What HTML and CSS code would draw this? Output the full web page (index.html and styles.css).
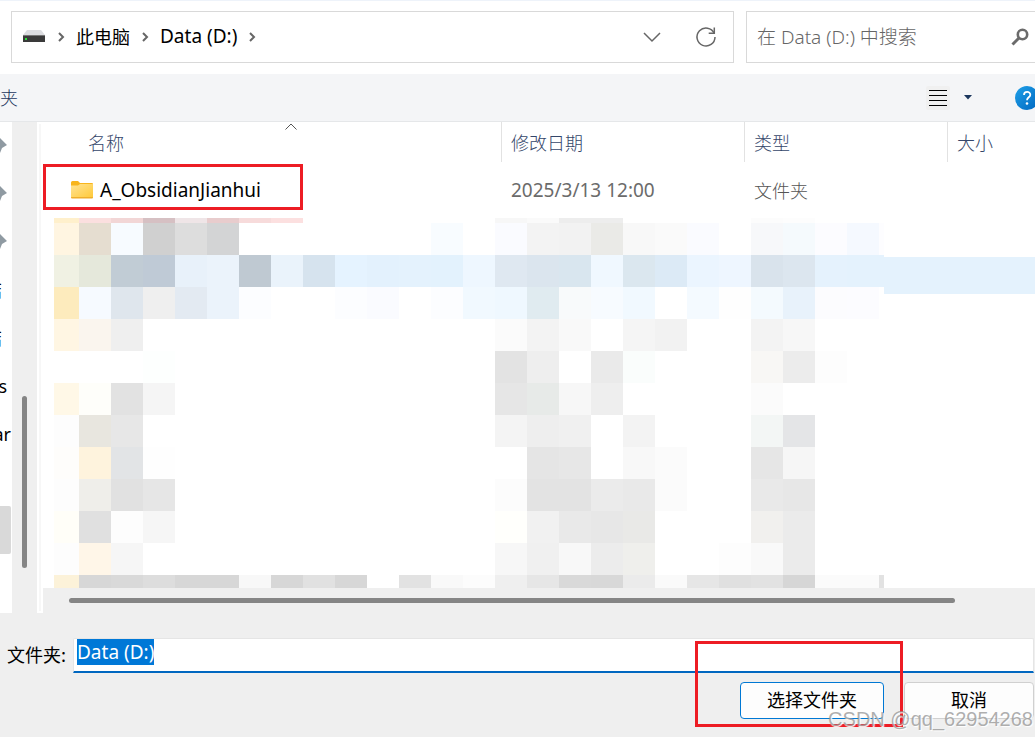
FILE: index.html
```
<!DOCTYPE html>
<html lang="zh-CN">
<head>
    <meta charset="UTF-8">
    <meta name="viewport" content="width=device-width, initial-scale=1.0">
    <title>选择文件夹</title>
    <link rel="stylesheet" href="styles.css">
</head>
<body>
    <header class="topbar">
        <nav class="address">
            <svg class="drive" width="24" height="16" viewBox="0 0 24 16">
                <path d="M5 1h14l4 5H1z" fill="#dcdde1"/>
                <rect x="1" y="6" width="22" height="7" fill="#3a3a3a"/>
                <rect x="1" y="6" width="22" height="1" fill="#777"/>
                <rect x="3" y="9" width="2" height="2" fill="#2be03a"/>
            </svg>
            <svg class="sep" width="8" height="12" viewBox="0 0 8 12"><path d="M2 2l4 4-4 4"/></svg>
            <a href="#" class="cjk">此电脑</a>
            <svg class="sep" width="8" height="12" viewBox="0 0 8 12"><path d="M2 2l4 4-4 4"/></svg>
            <a href="#">Data (D:)</a>
            <svg class="sep" width="8" height="12" viewBox="0 0 8 12"><path d="M2 2l4 4-4 4"/></svg>
            <button class="icon-btn push" aria-label="历史">
                <svg width="20" height="20" viewBox="0 0 20 20"><path d="M2 6l8 8 8-8" fill="none" stroke="#666" stroke-width="1.5"/></svg>
            </button>
            <button class="icon-btn" aria-label="刷新">
                <svg width="22" height="22" viewBox="0 0 22 22" fill="none" stroke="#666" stroke-width="1.5">
                    <path d="M19.2 7.3A9 9 0 1 0 20 11"/>
                    <path d="M19.3 1.5v5.8h-5.6"/>
                </svg>
            </button>
        </nav>
        <form class="search">
            <input type="text" placeholder="在 Data (D:) 中搜索" aria-label="搜索">
            <svg width="18" height="18" viewBox="0 0 18 18" fill="none" stroke="#6b6b6b">
                <circle cx="11.5" cy="6.5" r="4.7" stroke-width="2.6"/>
                <path d="M8 10l-6.5 6.5" stroke-width="3"/>
            </svg>
        </form>
    </header>

    <div class="toolbar">
        <button class="new-folder">新建文件夹</button>
        <button class="icon-btn view push" aria-label="视图">
            <svg width="18" height="18" viewBox="0 0 18 18" stroke="#000" stroke-width="1"><path d="M0 1.5h18M0 6.5h18M0 11.5h18M0 16.5h18"/></svg>
        </button>
        <button class="icon-btn more" aria-label="更多选项">
            <svg width="8" height="5" viewBox="0 0 8 5"><path d="M0 0h8L4 4.5z" fill="#1b365d"/></svg>
        </button>
        <button class="icon-btn help" aria-label="帮助">
            <svg width="24" height="24" viewBox="0 0 24 24">
                <defs>
                    <linearGradient id="helpFill" x1="0" y1="0" x2="1" y2="1">
                        <stop offset="0" stop-color="#1fa0e8"/>
                        <stop offset="1" stop-color="#0067c0"/>
                    </linearGradient>
                </defs>
                <circle cx="12" cy="12" r="12" fill="url(#helpFill)"/>
                <path d="M9 9c0-4 6.300-4 6.300-.3 0 2.600-3.300 2.600-3.300 5.600" fill="none" stroke="#fff" stroke-width="1.800"/>
                <circle cx="12" cy="17.500" r="1.300" fill="#fff"/>
            </svg>
        </button>
    </div>

    <main class="browser">
        <aside class="tree">
            <div class="tree-item pin"><svg width="7" height="16" viewBox="0 0 7 16"><path d="M0 0l7 7-5 3-2 5z" fill="#8f9aa2"/></svg></div>
            <div class="tree-item pin"><svg width="7" height="16" viewBox="0 0 7 16"><path d="M0 0l7 7-5 3-2 5z" fill="#8f9aa2"/></svg></div>
            <div class="tree-item pin"><svg width="7" height="16" viewBox="0 0 7 16"><path d="M0 0l7 7-5 3-2 5z" fill="#8f9aa2"/></svg></div>
            <div class="tree-item cut">结</div>
            <div class="tree-item cut">结</div>
            <div class="tree-item mid">s</div>
            <div class="tree-item">ar</div>
            <div class="tree-item"></div>
            <div class="tree-item selected"></div>
        </aside>
        <div class="vscroll"><div class="thumb"></div></div>
        <div class="splitter"></div>
        <section class="files">
            <table>
                <colgroup>
                    <col class="col-name">
                    <col class="col-date">
                    <col class="col-type">
                    <col>
                </colgroup>
                <thead>
                    <tr>
                        <th class="name">名称
                            <svg class="sort" width="12" height="7" viewBox="0 0 12 7"><path d="M.5 6.500L6 1l5.500 5.500" fill="none" stroke="#555"/></svg>
                        </th>
                        <th>修改日期</th>
                        <th>类型</th>
                        <th>大小</th>
                    </tr>
                </thead>
                <tbody>
                    <tr>
                        <td class="name">
                            <div class="file">
                                <svg width="22" height="18" viewBox="0 0 22 18">
                                    <defs>
                                        <linearGradient id="folderFill" x1="0" y1="0" x2="1" y2="1">
                                            <stop offset="0" stop-color="#ffe394"/>
                                            <stop offset="1" stop-color="#ffc937"/>
                                        </linearGradient>
                                    </defs>
                                    <path d="M0 1.500Q0 0 1.500 0H7l2 2h12q1 0 1 1v4H0z" fill="#f8b51c"/>
                                    <path d="M0 4.500h7L9 3h13v13q0 1-1 1H1q-1 0-1-1z" fill="url(#folderFill)"/>
                                    <path d="M0 16h22q0 1.500-1 1.500H1Q0 17.500 0 16z" fill="#efae2b"/>
                                </svg>
                                <span>A_ObsidianJianhui</span>
                            </div>
                            <div class="mark mark-folder"></div>
                        </td>
                        <td>2025/3/13 12:00</td>
                        <td class="cjk">文件夹</td>
                        <td></td>
                    </tr>
                </tbody>
            </table>
            <div class="hidden-rows">
                <svg id="mosaic" width="830" height="370" viewBox="0 0 830 370" shape-rendering="crispEdges"></svg>
                <div class="hover-row"></div>
            </div>
            <div class="hscroll"><div class="thumb"></div></div>
        </section>
    </main>

    <footer class="bottom">
        <div class="field">
            <label for="folder">文件夹:</label>
            <input type="text" id="folder" value="Data (D:)">
        </div>
        <div class="actions">
            <div class="primary">
                <button class="btn btn-default">选择文件夹</button>
                <div class="mark mark-select"></div>
            </div>
            <button class="btn">取消</button>
        </div>
        <div class="watermark">CSDN @qq_62954268</div>
    </footer>

    <script>
        // pixelated rows: one colour per cell, "-" leaves the cell empty
        const rows = [
            'fff0cc fbdfdf f2d6d6 d6c0c3 efe5e7 e8cccd f7dbdb fce0e0 - - - - - - f7f7f7 fafafa ededed ededed - - - - fcfcfc fdfdfd',
            'fff5e1 e5ddd0 f7fbff d0d0d0 dddddd d3d4d5 - - - - - - f8fcff - fafbff f3f3f3 f2f2f2 eaeae7 f8f8f8 fafafa fafbff - f7f8fa f5fafd fcfcff f5f9ff fdfdff',
            'f0f1e3 e5e8db c1ccd5 bfcad6 e8f1fa ebf3fb bfc9d2 eaf3fb d6e3ee e5f3ff e3f1fd e4f2fd e3f2fd eef7ff dfe8f1 dbe5ee d9e6ef f0f8ff dbe7ef dceaf6 ebf5ff eef6ff d9e3ec dce6ef e5f2fd e4f2fd e4f2fd',
            'fdebbd f6faff dfe6ed efefef e3eaf2 ebf3fb fcfdff - - fcfdff fafbff - fcfdff f1f9ff eff8ff e0ebf0 f8fafb f7fbff f1f9ff - f4faff fefefe f4fafe e8f2fb fcfcfe fcfcff',
            'fff6e3 faf5ee efefef - - - - - - - - - - - fbfbfb f3f3f3 f9f9f9 - f5f5f5 f2f2f2 - - f3f3f3 f7f7f7',
            '- - - fdfffe - - - - - - - - - - e3e3e3 eeeeee - eaeaea fafdfc - - - f8f7f5 ececec fdfdfd',
            'fff8e7 fefefa e2e2e2 f5f5f5 - - - - - - - - - - e6e6e6 e7eae8 f7f7f7 eeeeee - - - - fbfbfb',
            'fdfdfd e8e6df e7e7e7 - - - - - - - - - - - f4f4f4 eeeeee f0f0f0 - f3f3f3 - - - f3f6f5 e4e5e7',
            'fefdfb fef3dd e2e4e6 fefefe - - - - - - - - - - - e5e5e5 e7e7e7 - f8f8f8 fbfbfb - - e6e6e6 f6f6f6',
            'fdfdfd efeeea e1e1e1 e6e6e6 - - - - - - - - - - fcfcfc e3e3e3 e3e3e3 ebebeb e9e9e9 fbfbfb - - e9e9e9 e7e7e7',
            'fffef8 e0e0e0 fdfdfd f6f6f6 - - - - - - - - - - fffffc f1f1f1 e9e9e9 e7e7e7 e9e9e7 - - - f1f0ee ebebeb',
            'fdfdfd fff6e8 f6f6f6 - - - - - - - - - - - f7f7f7 f0f0f0 f8f8f8 ececec efefec - - fdfdfd f9f9f9 ebebeb',
            'fcf2d9 d7d7d7 d9d9d9 dddddd d7d7d7 d7d7d7 f8f8f8 d7d7d7 e1e1e1 d7d7d7 - e2e2e2 f9f9f9 fcfcfc efefef e6e6e6 d9d9d9 d8d8d8 ebebeb fafafa e6e6e6 e0e0e0 e2e2e2 d6d6d6 fbfbfb fbfbfb e2e2e2'
        ];
        const cell = 32;
        const mosaic = document.getElementById('mosaic');

        // the first column and the first row are cut off by the edge of the area
        rows.forEach((row, r) => {
            row.split(' ').forEach((color, c) => {
                if (color === '-') return;
                const rect = document.createElementNS('http://www.w3.org/2000/svg', 'rect');
                rect.setAttribute('x', c * cell - 7);
                rect.setAttribute('y', r * cell - 27);
                rect.setAttribute('width', cell);
                rect.setAttribute('height', cell);
                rect.setAttribute('fill', '#' + color);
                mosaic.appendChild(rect);
            });
        });

        document.getElementById('folder').select();
    </script>
</body>
</html>
```
FILE: styles.css
```
* {
    margin: 0;
    padding: 0;
    box-sizing: border-box;
}

body {
    font-family: "Noto Sans", "Noto Sans CJK SC", sans-serif;
    font-size: 19px;
    line-height: 24px;
    color: #000;
    background: #efefef;
    min-height: 100vh;
    display: flex;
    flex-direction: column;
    overflow: hidden;
}

button,
input {
    font: inherit;
    color: inherit;
    border: none;
    background: none;
    outline: none;
}

svg {
    display: block;
    flex-shrink: 0;
}

.push {
    margin-left: auto;
}

.cjk,
th,
label,
.new-folder,
.btn {
    font-family: "Noto Sans CJK SC", sans-serif;
    font-size: 18px;
    font-weight: 400;
}

th,
td.cjk {
    font-weight: 300;
}

/* address bar and search */
.topbar {
    display: flex;
    gap: 12px;
    padding: 10px 0 11px 11px;
    background: #fff;
    border-top: 1px solid #eef3fa;
}

.address,
.search {
    display: flex;
    align-items: center;
    height: 52px;
    border: 1px solid #d9d9d9;
}

.address {
    flex: 1;
    padding: 0 16px 0 10px;
}

.address a {
    padding-bottom: 2px;
    color: #000;
    text-decoration: none;
}

.sep {
    margin: 0 11px;
}

.sep path {
    fill: none;
    stroke: #666;
    stroke-width: 2;
}

.icon-btn {
    display: flex;
    align-items: center;
    justify-content: center;
}

.icon-btn + .icon-btn {
    margin-left: 33px;
}

.search {
    flex: 0 0 289px;
    min-width: 0;
    border-right: none;
    padding: 0 6px 0 10px;
}

.search input {
    flex: 1;
    min-width: 0;
    font-weight: 300;
}

.search input::placeholder {
    color: #666;
    opacity: 1;
}

/* command bar */
.toolbar {
    display: flex;
    align-items: center;
    height: 48px;
    background: #f4f5f7;
    border-bottom: 1px solid #e5e7e9;
    overflow: hidden;
}

.new-folder {
    width: 18px;
    padding-bottom: 2px;
    display: flex;
    justify-content: flex-end;
    white-space: nowrap;
    font-weight: 300;
    color: #1b365d;
}

.view {
    width: 24px;
    height: 24px;
    background: #f0f0f0;
    border-radius: 2px;
}

.toolbar .more {
    margin-left: 14px;
}

.toolbar .help {
    margin: 0 -4px 0 43px;
}

/* folder tree and file list */
.browser {
    display: flex;
}

.tree {
    width: 12px;
    background: #fff;
    overflow: hidden;
    font-size: 18px;
}

.tree-item {
    display: flex;
    align-items: center;
    justify-content: flex-end;
    height: 48px;
    padding-right: 1px;
}

.pin,
.mid {
    padding-right: 5px;
}

.cut {
    padding-right: 10px;
}

.selected {
    width: 11px;
    background: #d9d9d9;
    border-radius: 0 2px 2px 0;
}

.vscroll {
    width: 25px;
    padding: 274px 10px 45px;
    background: #efefef;
    display: flex;
}

.thumb {
    flex: 1;
    background: #858585;
    border-radius: 3px;
}

.splitter {
    width: 6px;
    background: #f7f7f7;
    border: 2px solid #fff;
}

.files {
    flex: 1;
    min-width: 0;
    background: #fff;
}

table {
    width: 100%;
    table-layout: fixed;
    border-collapse: separate;
    border-spacing: 0;
}

.col-name {
    width: 459px;
}

.col-date {
    width: 243px;
}

.col-type {
    width: 203px;
}

th,
td {
    text-align: left;
    padding-left: 9px;
    white-space: nowrap;
}

th {
    height: 40px;
    color: #34466a;
    border-right: 1px solid #e2e2e2;
}

th:last-child {
    border-right: none;
}

td {
    height: 56px;
    color: #6b6b6b;
}

td.cjk {
    color: #555;
}

.name {
    position: relative;
}

th.name {
    padding-left: 45px;
}

td.name {
    padding-left: 28px;
    color: #000;
}

.sort {
    position: absolute;
    top: 1px;
    left: 242px;
}

.file {
    display: flex;
    align-items: center;
    gap: 7px;
}

.hidden-rows {
    display: flex;
    padding-left: 11px;
}

.hover-row {
    flex: 1;
    height: 37px;
    margin-top: 39px;
    background: #e4f2fd;
}

.hscroll {
    display: flex;
    height: 25px;
    padding: 10px 80px 10px 26px;
    background: #efefef;
}

/* folder field and buttons */
.bottom {
    position: relative;
    flex: 1;
    padding: 25px 1px 0 0;
}

.field {
    display: flex;
    align-items: center;
}

label {
    width: 73px;
    padding: 0 0 3px 7px;
}

.field input {
    flex: 1;
    min-width: 0;
    height: 35px;
    padding: 0 3px 6px;
    background: #fff;
    border: 1px solid #e5e5e5;
    border-bottom: 2px solid #0067c0;
    border-radius: 2px 2px 0 0;
}

.field input::selection {
    background: #0078d7;
    color: #fff;
}

.actions {
    display: flex;
    justify-content: flex-end;
    gap: 20px;
    padding-top: 9px;
}

.primary {
    position: relative;
}

.btn {
    width: 130px;
    height: 37px;
    padding-bottom: 3px;
    background: #fdfdfd;
    border: 1px solid #d0d0d0;
    border-radius: 4px;
}

.btn-default {
    width: 144px;
    border-color: #0078d4;
}

/* highlights */
.mark {
    position: absolute;
    border: 3px solid #ed1c24;
    pointer-events: none;
}

.mark-folder {
    top: 2px;
    left: 0;
    width: 260px;
    height: 46px;
}

.mark-select {
    inset: -41px -19px -8px -45px;
}

.watermark {
    position: absolute;
    right: 2px;
    bottom: 6px;
    font-family: "Liberation Sans", sans-serif;
    font-size: 20px;
    color: rgba(140, 140, 140, 0.7);
    text-shadow: 1px 1px 1px #fff;
}
```
